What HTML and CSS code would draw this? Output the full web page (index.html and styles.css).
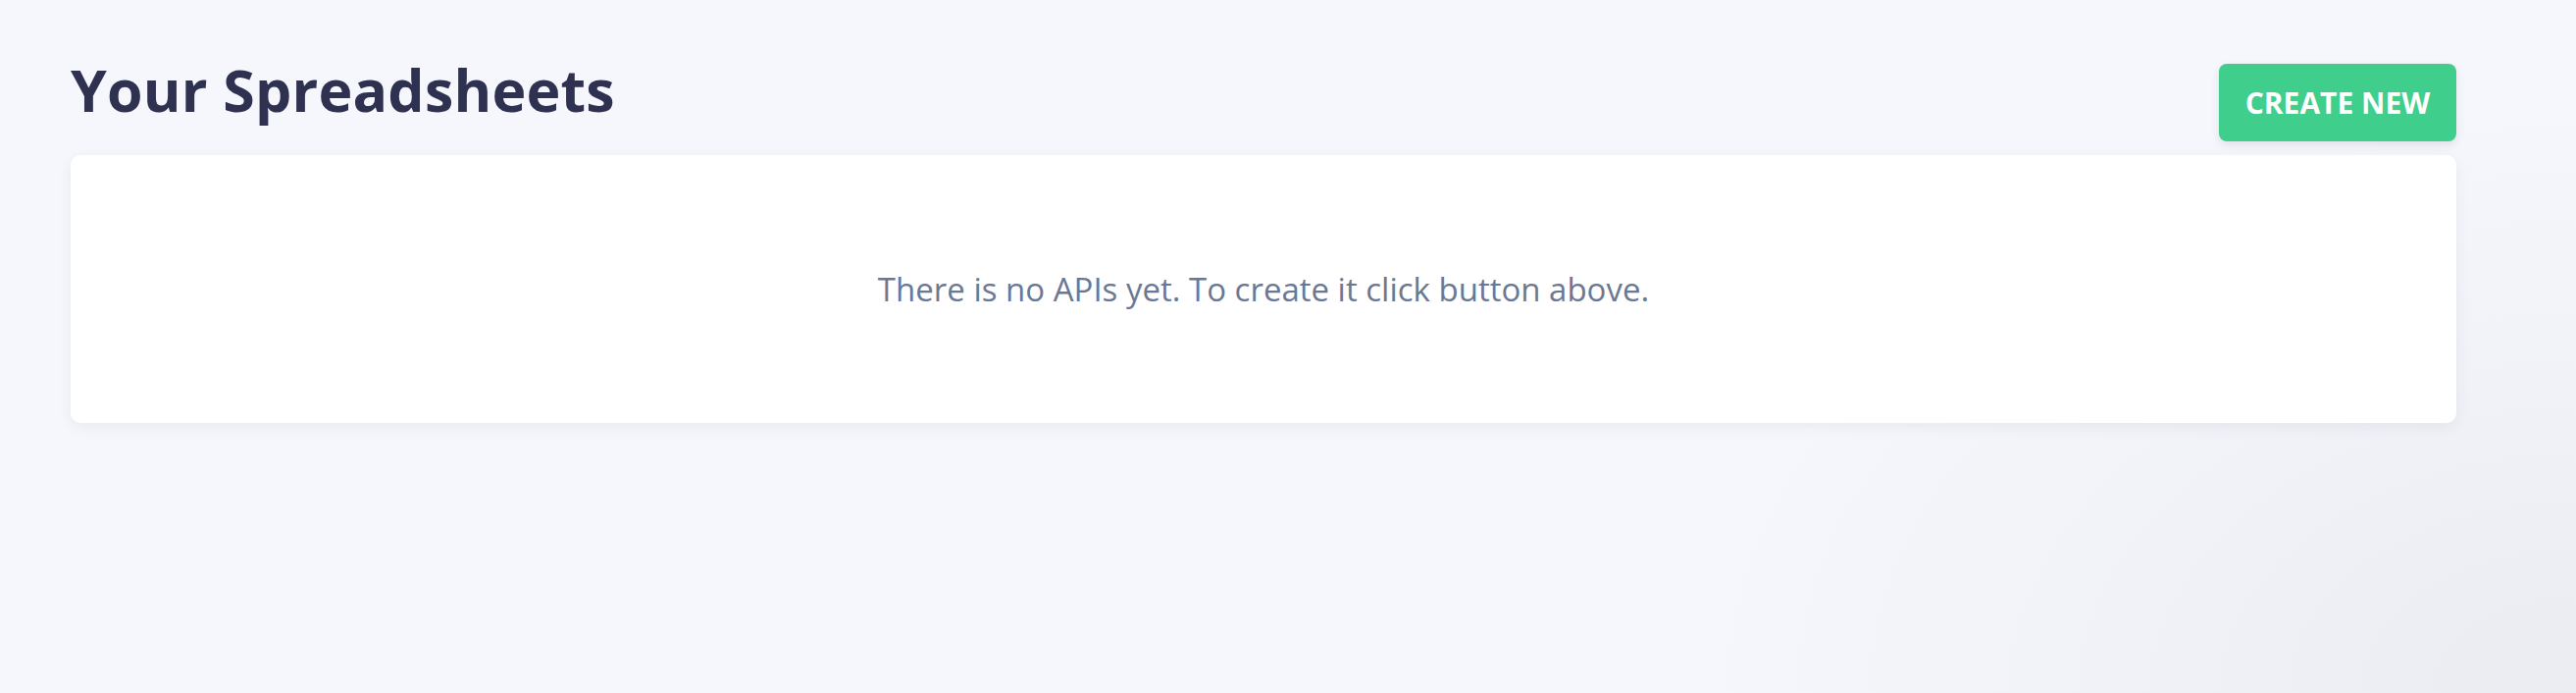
FILE: index.html
```html
<!DOCTYPE html>
<html lang="en">
<head>
  <meta charset="UTF-8" />
  <meta name="viewport" content="width=device-width, initial-scale=1.0"/>
  <title>Your Spreadsheets</title>
  <link rel="stylesheet" href="styles.css">
</head>
<body>
  <div class="page">
    <div class="header">
      <h1>Your Spreadsheets</h1>
      <button class="btn">Create New</button>
    </div>
    <!-- empty state -->
    <div class="card">
      <p class="empty">There is no APIs yet. To create it click button above.</p>
    </div>
  </div>
</body>
</html>
```

FILE: styles.css
```css
html, body {
  height: 100%;
}
body {
  font-family: "Open Sans", sans-serif;
  margin: 0;
  padding: 0;
  background-color: #f6f7fc;
  background-image: radial-gradient(ellipse 900px 600px at 100% 100%, #ebecf2 0%, rgba(235,236,242,0) 100%);
}
.page {
  width: 2432px;
  padding: 65px 0 0 72px;
}
.header {
  display: flex;
  justify-content: space-between;
  align-items: flex-start;
  margin-bottom: 14px;
}
h1 {
  margin: -15px 0 0 0;
  font-size: 59px;
  font-weight: 700;
  line-height: 82px;
  letter-spacing: 0.2px;
  color: #2f3150;
}
.btn {
  background-color: #40ce8d;
  color: white;
  border: none;
  height: 79px;
  width: 242px;
  border-radius: 8px;
  font-family: "Open Sans", sans-serif;
  font-size: 30px;
  font-weight: 700;
  text-transform: uppercase;
  box-shadow: 0 4px 10px rgba(40,50,90,0.1);
  cursor: pointer;
}
.card {
  background-color: white;
  border-radius: 10px;
  box-shadow: 0 4px 14px rgba(40,50,90,0.07);
  height: 273px;
  display: flex;
  align-items: center;
  justify-content: center;
}
.empty {
  margin: 0;
  font-size: 33px;
  color: #6b7894;
}
```
